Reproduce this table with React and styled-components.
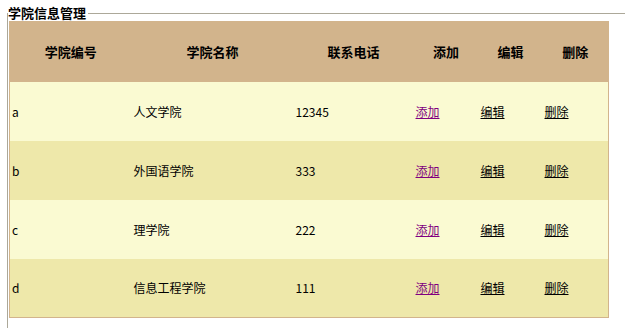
import React from "react";
import styled, { createGlobalStyle } from "styled-components";

const GlobalStyle = createGlobalStyle`
  html, body {
    margin: 0;
    padding: 0;
    overflow: hidden;
    background: #fff;
  }
  body {
    font-family: "Noto Sans CJK SC", "Noto Sans", sans-serif;
    font-size: 12px;
    color: #000;
  }
`;

const Frame = styled.fieldset`
  box-sizing: border-box;
  width: 618px;
  height: 322px;
  margin: 6px 0 0 7px;
  padding: 1px 0 0 1px;
  border: 1px solid #aca899;
  border-right: none;
  border-bottom: none;
`;

const Title = styled.legend`
  margin-left: -1px;
  padding: 0 2px 0 0;
  font-size: 13px;
  line-height: 14px;
  font-weight: bold;
`;

const Table = styled.table`
  width: 600px;
  table-layout: fixed;
  border-collapse: collapse;
  border: 1px solid #d2b48c;
`;

const HeadRow = styled.tr`
  height: 60px;
  background: #d2b48c;
`;

const HeadCell = styled.th`
  padding: 0 2px;
  font-size: 13px;
  font-weight: bold;
  text-align: center;
  vertical-align: middle;
`;

const Row = styled.tr`
  height: 59px;
  background: ${(p) => (p.$even ? "#eee8aa" : "#fafad2")};
`;

const Cell = styled.td`
  padding: 0 2px;
  font-size: 12px;
  text-align: left;
  vertical-align: middle;
  white-space: nowrap;
`;

const Link = styled.a`
  color: ${(p) => (p.$visited ? "#800080" : "#000")};
  text-decoration: underline;
  cursor: pointer;
`;

const colleges = [
  { id: "a", name: "人文学院", phone: "12345" },
  { id: "b", name: "外国语学院", phone: "333" },
  { id: "c", name: "理学院", phone: "222" },
  { id: "d", name: "信息工程学院", phone: "111" },
];

const widths = [122, 162, 120, 65, 64, 66];
const heads = ["学院编号", "学院名称", "联系电话", "添加", "编辑", "删除"];

export default function App() {
  return (
    <>
      <GlobalStyle />
      <Frame>
        <Title>学院信息管理</Title>
        <Table>
          <colgroup>
            {widths.map((w, i) => (
              <col key={i} style={{ width: w }} />
            ))}
          </colgroup>
          <thead>
            <HeadRow>
              {heads.map((h) => (
                <HeadCell key={h}>{h}</HeadCell>
              ))}
            </HeadRow>
          </thead>
          <tbody>
            {colleges.map((c, i) => (
              <Row key={c.id} $even={i % 2 === 1}>
                <Cell>{c.id}</Cell>
                <Cell>{c.name}</Cell>
                <Cell>{c.phone}</Cell>
                <Cell>
                  <Link $visited>添加</Link>
                </Cell>
                <Cell>
                  <Link>编辑</Link>
                </Cell>
                <Cell>
                  <Link>删除</Link>
                </Cell>
              </Row>
            ))}
          </tbody>
        </Table>
      </Frame>
    </>
  );
}
